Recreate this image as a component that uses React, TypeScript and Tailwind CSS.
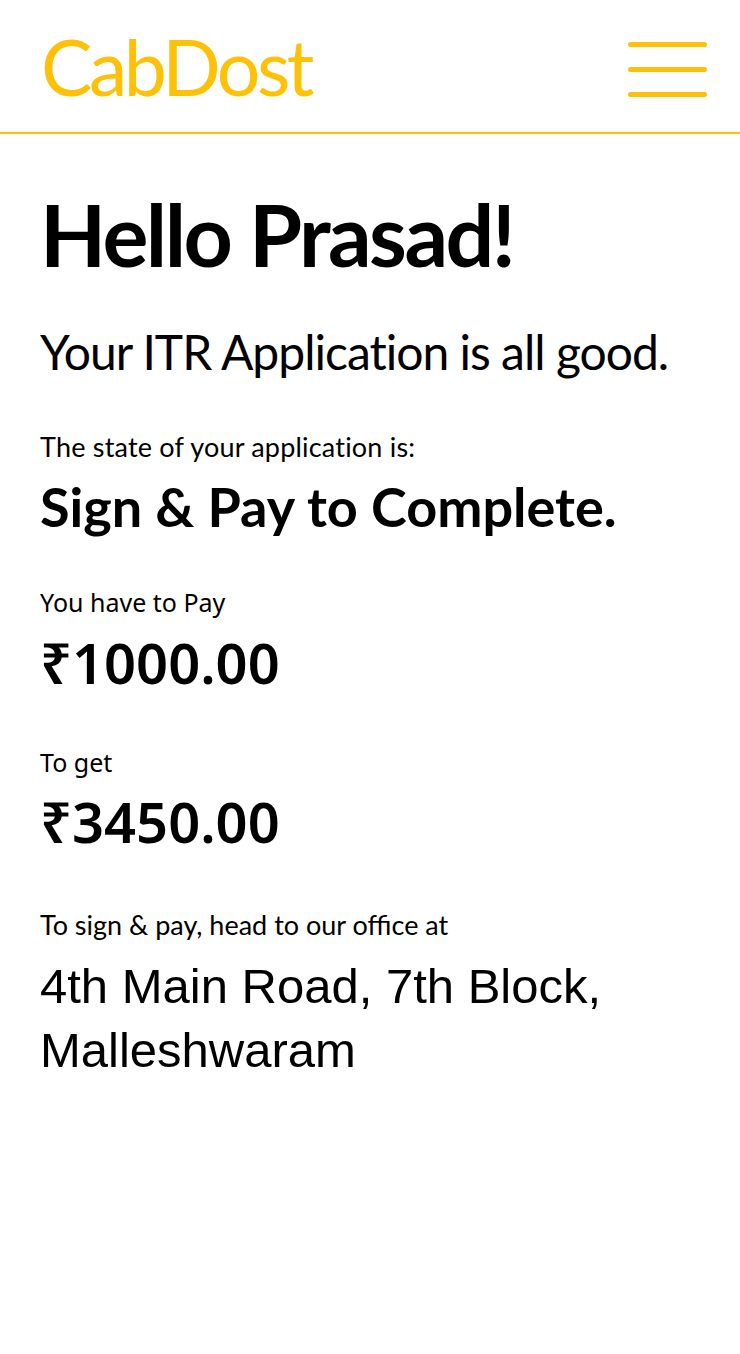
import React from 'react';

const lato = { fontFamily: 'Lato, "Open Sans", sans-serif' };

function Header() {
  return (
    <header className="flex h-[134px] items-center justify-between border-b-2 border-[#FFC107] pl-[41px] pr-[33px]">
      <div className="text-[77px] leading-none font-normal tracking-[-3.5px] text-[#FFC107] font-['Lato',sans-serif]">
        CabDost
      </div>
      <button className="mt-[6px] flex w-[79px] flex-col gap-[20px]" aria-label="Menu">
        <span className="block h-[5px] w-full rounded-full bg-[#FFC107]" />
        <span className="block h-[5px] w-full rounded-full bg-[#FFC107]" />
        <span className="block h-[5px] w-full rounded-full bg-[#FFC107]" />
      </button>
    </header>
  );
}

export default function App() {
  return (
    <div className="min-h-[1354px] bg-white text-black">
      <Header />
      <main className="px-[40px]">
        <h1 className="mt-[57px] text-[86px] leading-none font-bold tracking-[-2.5px] whitespace-nowrap font-['Lato',sans-serif]">
          Hello Prasad!
        </h1>
        <p className="mt-[51px] text-[48px] leading-none tracking-[-1px] whitespace-nowrap font-['Lato',sans-serif]">
          Your ITR Application is all good.
        </p>

        <p className="mt-[57px] text-[27px] leading-none tracking-[0.2px] font-['Lato',sans-serif]">
          The state of your application is:
        </p>
        <p className="mt-[20px] text-[54px] leading-none font-bold font-['Lato',sans-serif]">
          Sign &amp; Pay to Complete.
        </p>

        <p className="mt-[56px] text-[25px] leading-none font-['Noto_Sans',sans-serif]">You have to Pay</p>
        <p className="mt-[19px] text-[56px] leading-none font-semibold font-['Noto_Sans',sans-serif]">₹1000.00</p>

        <p className="mt-[60px] text-[25px] leading-none font-['Noto_Sans',sans-serif]">To get</p>
        <p className="mt-[18px] text-[56px] leading-none font-semibold font-['Noto_Sans',sans-serif]">₹3450.00</p>

        <p className="mt-[62px] text-[27px] leading-none" style={lato}>
          To sign &amp; pay, head to our office at
        </p>
        <p className="mt-[16px] text-[49px] leading-[64px] font-['Liberation_Sans',Arial,sans-serif]">
          4th Main Road, 7th Block,
          <br />
          Malleshwaram
        </p>
      </main>
    </div>
  );
}
